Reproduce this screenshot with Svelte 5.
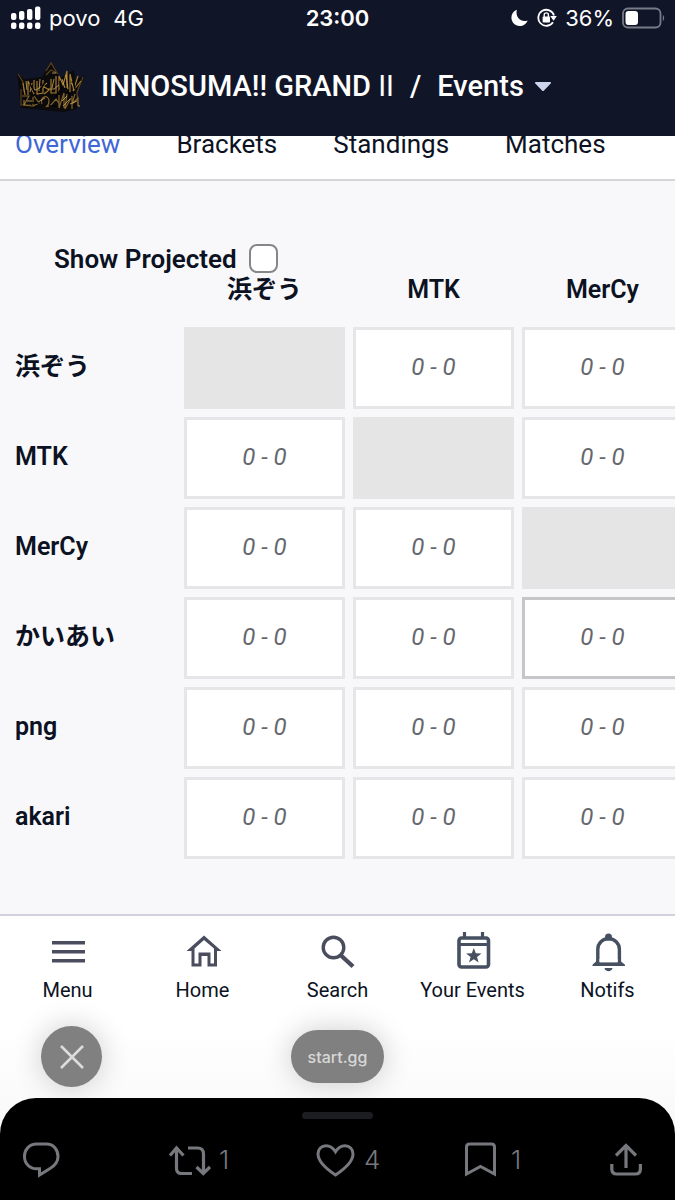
<script lang="ts">
  let showProjected = $state(false);

  const tabs = ['Overview', 'Brackets', 'Standings', 'Matches'];
  const columns = ['浜ぞう', 'MTK', 'MerCy'];
  const players = ['浜ぞう', 'MTK', 'MerCy', 'かいあい', 'png', 'akari'];

  let activeTab = $state('Overview');
  let selected = $state({ row: 3, col: 2 });
</script>

<div class="screen">
  <header class="top">
    <div class="status">
      <div class="status-left">
        <svg width="31" height="24" viewBox="0 0 31 24" fill="#fff" aria-hidden="true">
          <rect x="1" y="7" width="5.4" height="7" rx="2" />
          <rect x="9" y="5" width="5.4" height="9" rx="2" />
          <rect x="17" y="3" width="5.4" height="11" rx="2" />
          <rect x="25" y="0.5" width="5.4" height="13.5" rx="2" />
          <rect x="1" y="16.5" width="5.4" height="6.5" rx="2" />
          <rect x="9" y="16.5" width="5.4" height="6.5" rx="2" />
          <rect x="17" y="16.5" width="5.4" height="6.5" rx="2" />
          <rect x="25" y="16.5" width="5.4" height="6.5" rx="2" />
        </svg>
        <span class="carrier">povo</span>
        <span>4G</span>
      </div>
      <time class="clock">23:00</time>
      <div class="status-right">
        <svg width="18" height="18" viewBox="2 0 18 18" aria-hidden="true">
          <path d="M7.800.800C4.500 2.200 2.400 5 2.400 8.600c0 4.800 3.600 8.400 8.200 8.400 3.700 0 6.800-2.200 8-5.600-5.400 2.400-12.600-2-10.800-10.600z" fill="#fff" />
        </svg>
        <svg width="20" height="20" viewBox="0 0 20 20" fill="none" aria-hidden="true">
          <path d="M16 14.200A8 8 0 1 1 17 7.500" stroke="#fff" stroke-width="1.800" />
          <path d="M13.200 8h6.600l-3.200 4.800z" fill="#fff" />
          <rect x="5.600" y="8.600" width="7.400" height="5.800" rx="1" fill="#fff" />
          <path d="M7.200 9V7a2.100 2.100 0 0 1 4.200 0v2" stroke="#fff" stroke-width="1.400" />
        </svg>
        <span>36%</span>
        <svg width="43" height="22" viewBox="0 0 43 22" fill="none" aria-hidden="true">
          <rect x="1" y="1.500" width="37.500" height="19" rx="5" stroke="#787b88" stroke-width="1.800" />
          <rect x="3.500" y="4" width="12.500" height="14" rx="3" fill="#fff" />
          <path d="M40.800 8v6c1.800-.800 1.800-5.200 0-6z" fill="#787b88" />
        </svg>
      </div>
    </div>

    <div class="title-bar">
      <svg class="logo" width="70" height="54" viewBox="0 0 70 54" fill="none" aria-hidden="true">
        <path d="M1 14l7 6 18-2 9-14 9 15 14-8 1 9 10-3-7 14-1 19-14 3-42-4z" fill="#0b0a0c" />
        <path
          d="M2 15l5 8 1 10M30 12l5-8 6 10-6-3-5 5M5 30v16h10M67 18l-6 15 1 14"
          stroke="#59431a"
          stroke-width="1.200"
        />
        <path
          d="M7 24l2 12M12 36V22l6 13V21M21 22v13l6-1V21M31 24l-4 3 6 4-5 4M35 20v14h5V17M43 34V17l4 9 4-14v20M54 33V15l4 17M62 17l-5 15 8-10"
          stroke="#a27a2f"
          stroke-width="1.200"
        />
        <path
          d="M6 37h7l-5 9 8 1M17 38v9l6-3-5-7M26 45c-3-8 7-10 7-3s-7 6 1 5l6-7 4 6M43 36v13l5-15v15M51 35l-2 15 7-13v13M59 35l-3 10 6-6v8"
          stroke="#80622b"
          stroke-width="1.200"
        />
        <path
          d="M10 22l1 9M15 29l5 2 6-4M16 24l-2 9M24 20l-1 12M32 30h6l5-4M38 20l-2 9M46 20l3 9M50 16l2 14M55 24l4 5M11 42h5M22 43l7-4M46 42l5-5M54 45l7-3M36 14h4M62 47h2M47 47l7-7M8 41v5"
          stroke="#d0aa58"
          stroke-width=".800"
        />
        <path
          d="M24 31l6-9M39 39l7-10M50 29l5 10M16 44h7M33 47h8M14 25l5 9M44 22l1 10M57 22l2 8"
          stroke="#050507"
          stroke-width="1.600"
        />
      </svg>
      <h1><a href="#tournament">INNOSUMA!! GRAND <span class="numeral">II</span></a></h1>
      <span class="slash">/</span>
      <button class="events" type="button">
        Events
        <svg width="18" height="11" viewBox="0 0 18 11" aria-hidden="true">
          <path d="M1.500 1h15q1 .500.200 1.500L10 9.500q-1 1-2 0L1.300 2.500Q.500 1.500 1.500 1z" fill="#ccd4ee" />
        </svg>
      </button>
    </div>
  </header>

  <nav class="tabs" aria-label="Event">
    {#each tabs as tab}
      <a
        href="#{tab.toLowerCase()}"
        class:active={activeTab === tab}
        onclick={() => (activeTab = tab)}>{tab}</a
      >
    {/each}
  </nav>

  <main>
    <div class="projected">
      <label for="projected">Show Projected</label>
      <input id="projected" type="checkbox" bind:checked={showProjected} />
    </div>

    <div class="table-wrap">
      <table>
        <thead>
          <tr>
            <td class="corner"></td>
            {#each columns as name}
              <th scope="col">{name}</th>
            {/each}
          </tr>
        </thead>
        <tbody>
          {#each players as player, row}
            <tr>
              <th scope="row">{player}</th>
              {#each columns as _, col}
                {#if row === col}
                  <td class="self"></td>
                {:else}
                  <td
                    class="score"
                    class:selected={selected.row === row && selected.col === col}
                    onclick={() => (selected = { row, col })}>0 - 0</td
                  >
                {/if}
              {/each}
            </tr>
          {/each}
        </tbody>
      </table>
    </div>
  </main>

  <div class="lower">
    <nav class="bottom-nav" aria-label="Main">
      <a href="#menu">
        <svg width="40" height="40" viewBox="0 0 40 40" aria-hidden="true">
          <path d="M4 9h33v3.500H4zM4 18h33v3.500H4zM4 27h33v3.500H4z" fill="#4a4d5e" />
        </svg>
        Menu
      </a>
      <a href="#home">
        <svg width="40" height="40" viewBox="0 0 40 40" fill="none" aria-hidden="true">
          <path
            fill-rule="evenodd"
            d="M21 3.500L38.500 19H34v15.500h-9.500V24h-6v10.500H8.500V19H3.500zM21 8l-9.500 8.500v15h4v-11h12v11h3.500v-15z"
            fill="#4a4d5e"
          />
        </svg>
        Home
      </a>
      <a href="#search">
        <svg width="40" height="40" viewBox="0 0 40 40" fill="none" aria-hidden="true">
          <circle cx="15.500" cy="15.500" r="10.300" stroke="#4a4d5e" stroke-width="3.400" />
          <path d="M22.500 23l12.500 11.500" stroke="#4a4d5e" stroke-width="4.400" />
        </svg>
        Search
      </a>
      <a href="#your-events">
        <svg width="40" height="40" viewBox="0 0 40 40" fill="none" aria-hidden="true">
          <rect x="6" y="6" width="29.500" height="29" rx="2.500" stroke="#465061" stroke-width="3.600" />
          <path d="M6 12.500h30M11.500 0v6M29.500 0v6" stroke="#465061" stroke-width="3.200" />
          <path
            d="M20.800 16l2 5.200 5.700.200-4.500 3.500 1.600 5.600-4.800-3.300-4.800 3.300 1.600-5.600-4.500-3.500 5.700-.200z"
            fill="#465061"
          />
        </svg>
        Your Events
      </a>
      <a href="#notifs">
        <svg width="40" height="40" viewBox="0 0 40 40" fill="none" aria-hidden="true">
          <circle cx="20.500" cy="5" r="3.500" fill="#465061" />
          <path
            d="M9.800 32V17.500C9.800 11 14.500 6.800 20.500 6.800S31.400 11 31.400 17.500V32"
            stroke="#465061"
            stroke-width="3.400"
          />
          <path d="M4.500 34v-1.200l3.500-3.300h25l4 3.300V34z" fill="#465061" />
          <path d="M11.500 27h18.200v3.400H11.500z" fill="#fff" />
          <path d="M16.500 36h8c-.500 4.200-7.500 4.200-8 0z" fill="#465061" />
        </svg>
        Notifs
      </a>
    </nav>

    <div class="browser-bar">
      <button class="close" type="button" aria-label="Close">
        <svg width="26" height="26" viewBox="0 0 26 26" aria-hidden="true">
          <path d="M2 2l22 22M24 2L2 24" stroke="#dcdcdc" stroke-width="2.600" />
        </svg>
      </button>
      <button class="domain" type="button">start.gg</button>
    </div>

    <footer class="sheet">
      <div class="handle"></div>
      <div class="actions">
        <button type="button" aria-label="Reply">
          <svg width="38" height="38" viewBox="0 0 38 38" fill="none" aria-hidden="true">
            <path
              d="M14.500 3h10C31.500 3 36 8.600 36 15.500c0 6-3.500 9.300-8 12L17.500 34v-6.200h-2.800C7.500 27.800 2.500 22.500 2.500 15.500S7.500 3 14.500 3z"
              stroke="#76787d"
              stroke-width="3"
            />
          </svg>
        </button>
        <button type="button">
          <svg width="42" height="38" viewBox="0 0 42 38" fill="none" stroke="#76787d" stroke-width="3.200" aria-hidden="true">
            <path d="M1 14.500L7.500 7l7 7.500M7.500 8v19.500q0 5 5 5H23M19 7h9.500q6 0 6 6v18.500M27.500 26l6.800 6.500L41 26" />
          </svg>
          1
        </button>
        <button type="button">
          <svg width="40" height="38" viewBox="0 0 40 38" fill="none" aria-hidden="true">
            <path
              d="M19.500 34C9 27 2 20 2 13 2 8 5.500 4.800 10 4.800c4 0 7 2 9.500 6 2.500-4 5.500-6 9.500-6 4.500 0 8 3.200 8 8.200 0 7-7 14-17.500 21z"
              stroke="#76787d"
              stroke-width="3"
            />
          </svg>
          4
        </button>
        <button type="button">
          <svg width="40" height="38" viewBox="0 0 40 38" fill="none" aria-hidden="true">
            <path
              d="M3.500 33V6q0-3 3-3h22q3 0 3 3v27l-14-7.500z"
              stroke="#76787d"
              stroke-width="3"
            />
          </svg>
          1
        </button>
        <button type="button" aria-label="Share">
          <svg width="32" height="38" viewBox="0 0 32 38" fill="none" stroke="#76787d" stroke-width="3.200" aria-hidden="true">
            <path d="M16 27V5M6 14.500L16 4.500l10 10M1.800 23v5q0 5 5 5h18.600q5 0 5-5v-5" />
          </svg>
        </button>
      </div>
    </footer>
  </div>
</div>

<style>
  :global(body) {
    margin: 0;
    background: #f8f8fb;
  }

  .screen {
    font-family: Roboto, "Noto Sans CJK JP", sans-serif;
    color: #0c1222;
    overflow: hidden;
  }

  a {
    color: inherit;
    text-decoration: none;
  }
  button {
    font: inherit;
    color: inherit;
    background: none;
    border: none;
    padding: 0;
    cursor: pointer;
  }
  svg {
    display: block;
    flex: none;
  }

  .top {
    background: #111528;
    color: #fff;
  }

  .status {
    display: grid;
    grid-template-columns: 1fr auto 1fr;
    align-items: center;
    height: 36px;
    padding: 0 10px;
    font-family: Inter, "Liberation Sans", sans-serif;
    font-size: 22px;
    line-height: 36px;
  }
  .status-left,
  .status-right {
    display: flex;
    align-items: center;
    gap: 8px;
  }
  .status-right {
    justify-content: flex-end;
  }
  .carrier {
    margin-right: 5px;
  }
  .clock {
    font-weight: 600;
  }

  .title-bar {
    display: flex;
    align-items: center;
    height: 100px;
    padding: 0 16px;
    font-size: 29px;
    font-weight: 500;
    line-height: 32px;
    white-space: nowrap;
  }
  .logo {
    margin-right: 15px;
  }
  h1 {
    margin: 0;
    font-size: 29px;
    font-weight: 500;
  }
  .numeral {
    font-weight: 400;
  }
  .slash {
    margin: 0 16px;
  }
  .events {
    display: flex;
    align-items: center;
    gap: 10px;
  }

  .tabs {
    display: flex;
    gap: 56px;
    height: 43px;
    padding: 0 15px;
    overflow: hidden;
    background: #fff;
    border-bottom: 2px solid #d6d6d9;
    font-size: 26px;
    line-height: 16px;
  }
  .tabs .active {
    color: #4067d6;
  }

  main {
    padding: 63px 0 47px;
    background: #f8f8fb;
  }

  .projected {
    display: flex;
    align-items: center;
    gap: 12px;
    padding-left: 54px;
    font-size: 26px;
    font-weight: 600;
    line-height: 28px;
  }
  .projected input {
    appearance: none;
    width: 29px;
    height: 29px;
    margin: 0;
    background: #fff;
    border: 2px solid #868688;
    border-radius: 8px;
  }
  .projected input:checked {
    background: #4067d6;
  }

  .table-wrap {
    margin-top: -4px;
    overflow: hidden;
  }
  table {
    width: 102%;
    min-width: 691px;
    table-layout: fixed;
    border-collapse: separate;
    border-spacing: 8px;
    font-size: 25px;
  }
  th,
  td {
    box-sizing: border-box;
    padding: 0;
  }
  th {
    font-weight: 600;
    line-height: 26px;
  }
  thead th {
    height: 42px;
    vertical-align: top;
  }
  .corner {
    width: 168px;
  }
  tbody th {
    height: 82px;
    padding: 0 0 2px 7px;
    text-align: left;
  }
  .score {
    padding-bottom: 2px;
    background: #fff;
    border: 3px solid #e6e6e8;
    color: #66686e;
    font-size: 24px;
    font-style: italic;
    text-align: center;
    cursor: pointer;
  }
  .score.selected {
    border-color: #c6c6c8;
  }
  .self {
    background: #e5e5e5;
  }

  .lower {
    background: linear-gradient(#fff 40%, #f8f8f8 75%);
    border-top: 2px solid #d2d2dc;
  }

  .bottom-nav {
    display: grid;
    grid-template-columns: repeat(5, 1fr);
    padding-top: 16px;
    font-size: 20px;
    line-height: 24px;
  }
  .bottom-nav a {
    display: flex;
    flex-direction: column;
    align-items: center;
    gap: 6px;
  }

  .browser-bar {
    display: grid;
    grid-template-columns: 1fr auto 1fr;
    align-items: center;
    padding: 24px 41px 11px;
  }
  .close {
    display: grid;
    place-items: center;
    width: 61px;
    height: 61px;
    background: #808080;
    border-radius: 50%;
    box-shadow: 0 0 30px rgba(0, 0, 0, 0.2);
  }
  .domain {
    height: 53px;
    padding: 0 17px;
    background: #808080;
    border-radius: 27px;
    box-shadow: 0 0 30px rgba(0, 0, 0, 0.2);
    color: #d8d8d8;
    font-family: Inter, "Liberation Sans", sans-serif;
    font-size: 16px;
    font-weight: 500;
  }

  .sheet {
    padding: 14px 0 21px;
    background: #000;
    border-radius: 36px 36px 0 0;
    color: #76787d;
    font-family: Inter, "Liberation Sans", sans-serif;
    font-size: 26px;
    font-weight: 300;
  }
  .handle {
    width: 71px;
    height: 7px;
    margin: 0 auto;
    background: #1c1d20;
    border-radius: 4px;
  }
  .actions {
    display: grid;
    grid-template-columns: repeat(4, 1fr) auto;
    margin-top: 22px;
    padding: 0 33px 0 22px;
  }
  .actions button {
    display: flex;
    align-items: center;
    gap: 8px;
    line-height: 38px;
  }
</style>
